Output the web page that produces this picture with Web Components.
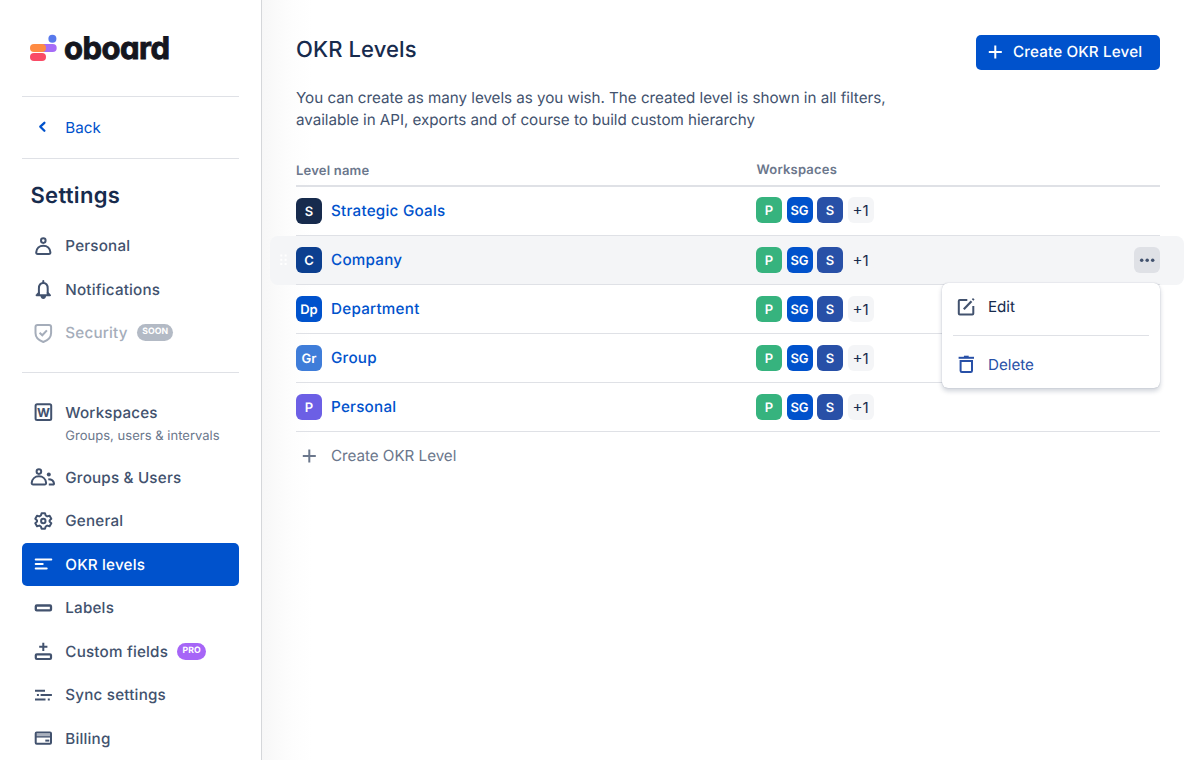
<!DOCTYPE html>
<html lang="en">
<head>
<meta charset="utf-8">
<title>OKR Levels</title>
<style>
  html, body {
    margin: 0;
    height: 100%;
    overflow: hidden;
    background: #fff;
  }
  body {
    font-family: Inter, "Liberation Sans", sans-serif;
    font-size: 15.2px;
    letter-spacing: -0.03px;
    text-rendering: geometricPrecision;
    color: #42526e;
  }
</style>
</head>
<body>
<okr-app></okr-app>

<script>
// Icons are drawn on a 26x24 grid, one unit per pixel
const ICONS = {
  back: '<path d="M14.1 7.800 10 11.700l4.100 4.100" stroke-width="2.300" stroke-linecap="round" stroke-linejoin="round"/>',
  person: '<circle cx="13" cy="6.6" r="2.3"/><path d="M5.9 18.3c.3-3.8 3.2-6.6 7.1-6.6s6.800 2.800 7.100 6.600c.1 1-.5 1.700-1.500 1.700H7.400c-1 0-1.600-.7-1.500-1.700z"/>',
  bell: '<path d="M8.600 18v-6.500c0-3.400 1.700-5.500 4.400-5.500s4.400 2.100 4.400 5.500V18" stroke-width="2"/><path d="M13 4v2M6.300 18.200h13.400M7 17.500l1.600-1.500M19 17.500 17.400 16" stroke-width="2" stroke-linecap="round"/><path d="M10.200 19h5.600c-.3 1.900-1.300 2.900-2.800 2.900s-2.500-1-2.800-2.900z" fill="currentColor" stroke="none"/>',
  shield: '<path d="M7.300 3.900h11.400c1.300 0 2.100.8 2.100 2.100v6c0 4.300-3 7.300-7.800 9-4.800-1.700-7.800-4.700-7.800-9V6c0-1.300.8-2.100 2.100-2.100z"/><path d="m9.300 11.800 2.700 2.500 4.600-4.900" stroke-width="2"/>',
  workspace: '<rect x="5.300" y="4.300" width="15.600" height="15.600" rx="1.500"/><text x="13.1" y="16.500" text-anchor="middle" font-size="12.500" font-weight="700" letter-spacing="0" fill="currentColor" stroke="none">W</text>',
  group: '<circle cx="8.600" cy="6.600" r="2.300"/><path d="M1.400 17.900c.3-3.800 3.200-6.600 7.200-6.600s6.900 2.800 7.200 6.600c.1 1-.5 1.600-1.500 1.600H2.900c-1 0-1.600-.6-1.500-1.600z"/><circle cx="18.500" cy="9.600" r="2" fill="currentColor" stroke="none"/><path d="M18 14.200c3.300 0 5.300 1.500 5.700 4.200.1.700-.3 1.100-1 1.100H18.500"/>',
  gear: '<path d="M11.300 4.200h3.400l.7 2.300 1.500.9 2.400-.6 1.700 2.900-1.700 1.700v1.200l1.700 1.700-1.700 2.900-2.400-.6-1.500.9-.7 2.300h-3.400l-.7-2.300-1.500-.9-2.400.6L5 14.300l1.700-1.700v-1.200L5 9.700l1.700-2.900 2.400.6 1.500-.9z" stroke-linejoin="round"/><circle cx="13" cy="12" r="2.200"/>',
  levels: '<path d="M5.400 7.500h15.600M5.400 12h7M5.400 16.600h11" stroke-linecap="round"/>',
  label: '<rect x="5.500" y="9.500" width="15.200" height="4.900" rx="1" stroke-width="2.300"/>',
  field: '<rect x="5.500" y="15.300" width="15.200" height="4.700" rx="1" stroke-width="2.200"/><path d="M13 3.700v8.200M8.900 7.800h8.200"/>',
  sync: '<path d="M4.700 7.700h10M10.300 12h11.300M6.600 12h2M4.700 16.400h10.500M17.500 16.400h2" stroke-width="2"/>',
  card: '<path d="M5.300 8h15.400v3H5.300z" fill="currentColor" stroke="none" opacity=".45"/><rect x="5.400" y="6.600" width="15.300" height="11.100" rx="1"/><path d="M5.400 10.900h15.300" stroke-width="1.300"/><path d="M15 14.600h4"/>',
  plus: '<path d="M13 5.500v13M6.500 12h13"/>',
  edit: '<path d="M14 5H6.500c-.6 0-1 .4-1 1v12.500c0 .6.4 1 1 1H19c.6 0 1-.4 1-1V11"/><path d="m10.500 14.200 7.700-8" stroke-width="2.200"/><path d="m19.300 5 1.200-1.200" stroke-width="2.200"/>',
  trash: '<path d="M5.300 5.800h15.400" stroke-width="2"/><path d="M10.600 4.700h4.800" stroke-width="2"/><path d="M7.300 9.100h11.400v9.700c0 .8-.4 1.200-1.200 1.200h-9c-.8 0-1.200-.4-1.200-1.200z" stroke-width="2"/>',
  dots: '<g fill="currentColor" stroke="none"><circle cx="7.400" cy="13.300" r="1.750"/><circle cx="12.900" cy="13.300" r="1.750"/><circle cx="18.400" cy="13.300" r="1.750"/></g>',
  grip: '<g fill="currentColor" stroke="none"><path d="M10 6.500h2v2h-2zM14.300 6.500h2v2h-2zM10 10.700h2v2h-2zM14.300 10.700h2v2h-2zM10 15h2v2h-2zM14.300 15h2v2h-2z"/></g>'
};

class UiIcon extends HTMLElement {
  constructor() {
    super();
    this.attachShadow({ mode: 'open' });
  }

  connectedCallback() {
    this.shadowRoot.innerHTML = `
      <style>
        :host { display: block; flex: none; width: 26px; height: 24px; }
        svg { display: block; overflow: visible; }
      </style>
      <svg width="26" height="24" viewBox="-0.3 0 26 24" fill="none" stroke="currentColor" stroke-width="2" aria-hidden="true">${ICONS[this.getAttribute('name')]}</svg>
    `;
  }
}

class OboardLogo extends HTMLElement {
  constructor() {
    super();
    this.attachShadow({ mode: 'open' });
    this.shadowRoot.innerHTML = `
      <style>
        :host { display: flex; align-items: flex-start; gap: 7px; }
        svg { display: block; flex: none; }
        span {
          margin-top: -1px;
          color: #15161e;
          font-size: 31px;
          font-weight: 700;
          line-height: 32px;
          letter-spacing: -0.5px;
          font-feature-settings: "cv11";
          -webkit-text-stroke: 0.9px #15161e;
        }
      </style>
      <svg width="27" height="28" viewBox="0 0 27 28">
        <rect x="10" y="10" width="16.700" height="8" rx="4" fill="#a66cf7"/>
        <rect x="0" y="10" width="16" height="8" rx="4" fill="#ff8b42"/>
        <rect x="0" y="19" width="16" height="8" rx="4" fill="#f94b66"/>
        <circle cx="22.400" cy="4.700" r="4" fill="#5879ec"/>
      </svg>
      <span>oboard</span>
    `;
  }
}

class NavItem extends HTMLElement {
  constructor() {
    super();
    this.attachShadow({ mode: 'open' });
  }

  connectedCallback() {
    this.shadowRoot.innerHTML = `
      <style>
        :host {
          display: flex;
          align-items: center;
          gap: 9.300px;
          height: 43.5px;
          padding-left: 8px;
          border-radius: 5px;
          font-weight: 500;
          letter-spacing: 0.2px;
          color: #42526e;
        }
        :host([active]) { background: #0052cc; color: #fff; }
        :host([disabled]) { color: #a5adba; }
        :host([link]) {
          box-sizing: border-box;
          height: 61px;
          padding-bottom: 1px;
          color: #0052cc;
          font-weight: 400;
          letter-spacing: 0;
        }
      </style>
      <ui-icon name="${this.getAttribute('icon')}"></ui-icon>
      <slot></slot>
    `;
  }
}

class UiTag extends HTMLElement {
  constructor() {
    super();
    this.attachShadow({ mode: 'open' });
    this.shadowRoot.innerHTML = `
      <style>
        :host {
          display: block;
          height: 17px;
          padding: 0 5.200px;
          border-radius: 9px;
          background: var(--tag, #b3bac5);
          color: #fff;
          font-size: 8.7px;
          font-weight: 700;
          line-height: 17.500px;
          letter-spacing: 0.1px;
        }
      </style>
      <slot></slot>
    `;
  }
}

class AppSidebar extends HTMLElement {
  constructor() {
    super();
    this.attachShadow({ mode: 'open' });
    this.shadowRoot.innerHTML = `
      <style>
        :host {
          display: block;
          flex: none;
          box-sizing: border-box;
          width: 262px;
          height: 760px;
          padding: 0 22px;
          background: #fff;
          border-right: 1px solid #d5d7da;
          overflow: hidden;
        }
        oboard-logo { height: 62px; padding: 34px 0 0 8px; }
        hr { margin: 0; border: 0; height: 1px; background: #dfe1e6; }
        h2 {
          margin: 0 0 13px;
          padding: 22px 0 0 8.5px;
          color: #172b4d;
          font-size: 22px;
          font-weight: 600;
          line-height: 30px;
          letter-spacing: 0.3px;
        }
        .section { padding: 17.500px 0; }
        small {
          display: block;
          margin: -8px 0 9.500px 43.300px;
          height: 20px;
          color: #6b778c;
          font-size: 13px;
          line-height: 20px;
          letter-spacing: 0.02px;
        }
        nav { width: 217.400px; }
      </style>
      <nav aria-label="Settings">
        <oboard-logo></oboard-logo>
        <hr>
        <nav-item icon="back" link>Back</nav-item>
        <hr>
        <h2>Settings</h2>
        <nav-item icon="person">Personal</nav-item>
        <nav-item icon="bell">Notifications</nav-item>
        <nav-item icon="shield" disabled>Security<ui-tag>SOON</ui-tag></nav-item>
        <hr style="margin-top: 17.500px">
        <div class="section">
          <nav-item icon="workspace">Workspaces</nav-item>
          <small>Groups, users &amp; intervals</small>
          <nav-item icon="group">Groups &amp; Users</nav-item>
          <nav-item icon="gear">General</nav-item>
          <nav-item icon="levels" active>OKR levels</nav-item>
          <nav-item icon="label">Labels</nav-item>
          <nav-item icon="field">Custom fields<ui-tag style="--tag: #a665f7">PRO</ui-tag></nav-item>
          <nav-item icon="sync">Sync settings</nav-item>
          <nav-item icon="card">Billing</nav-item>
        </div>
      </nav>
    `;
  }
}

class LevelBadge extends HTMLElement {
  constructor() {
    super();
    this.attachShadow({ mode: 'open' });
    this.shadowRoot.innerHTML = `
      <style>
        :host {
          display: block;
          flex: none;
          width: 26px;
          height: 26px;
          border-radius: 6px;
          background: var(--badge);
          color: #fff;
          font-size: 13px;
          font-weight: 600;
          line-height: 28px;
          text-align: center;
          letter-spacing: 0;
        }
        :host([more]) {
          background: #f4f5f7;
          color: #172b4d;
          font-size: 15.200px;
          font-weight: 400;
          line-height: 27px;
        }
      </style>
      <slot></slot>
    `;
  }
}

class LevelRow extends HTMLElement {
  constructor() {
    super();
    this.attachShadow({ mode: 'open' });
  }

  connectedCallback() {
    const hovered = this.hasAttribute('hovered');
    this.shadowRoot.innerHTML = `
      <style>
        :host {
          display: block;
          height: 49px;
          margin: 0 -24px 0 -26px;
          padding: 0 24px 0 26px;
          box-sizing: border-box;
          border-radius: 8px;
        }
        :host([hovered]) { background: #f4f5f7; }
        :host([first]) .spaces { margin-top: -2px; }
        .row {
          position: relative;
          display: grid;
          grid-template-columns: 460px 1fr 26px;
          align-items: center;
          height: 48px;
          border-bottom: 1px solid #dfe1e6;
        }
        .name { display: flex; align-items: center; gap: 9px; color: #0052cc; font-weight: 500; letter-spacing: 0.25px; }
        .label { padding-bottom: 2px; }
        .spaces { display: flex; gap: 4.500px; }
        .grip { position: absolute; left: -26px; color: #fff; }
        .more { height: 26px; border-radius: 6px; background: #dfe1e6; color: #42526e; }
      </style>
      <div class="row">
        ${hovered ? '<ui-icon class="grip" name="grip"></ui-icon>' : ''}
        <div class="name">
          <level-badge style="--badge: ${this.getAttribute('color')}">${this.getAttribute('short')}</level-badge>
          <span class="label"><slot></slot></span>
        </div>
        <div class="spaces">
          <level-badge style="--badge: #36b37e">P</level-badge>
          <level-badge style="--badge: #0052cc">SG</level-badge>
          <level-badge style="--badge: #2850a7">S</level-badge>
          <level-badge more>+1</level-badge>
        </div>
        ${hovered ? '<div class="more"><ui-icon name="dots"></ui-icon></div>' : ''}
      </div>
    `;
  }
}

class RowMenu extends HTMLElement {
  constructor() {
    super();
    this.attachShadow({ mode: 'open' });
    this.shadowRoot.innerHTML = `
      <style>
        :host {
          display: block;
          box-sizing: border-box;
          width: 218px;
          height: 105px;
          padding: 0 11px;
          border-radius: 6px;
          background: #fff;
          box-shadow: 0 3px 5px rgba(9, 30, 66, 0.2), 0 0 1px rgba(9, 30, 66, 0.31);
        }
        div { display: flex; align-items: center; gap: 9px; height: 48px; color: #172b4d; }
        .edit { height: 47px; padding-bottom: 5px; }
        ui-icon { color: #42526e; }
        hr { margin: 0; border: 0; height: 1px; background: #dfe1e6; }
        .delete, .delete ui-icon { color: #2850a7; }
        .delete { padding-top: 4px; }
      </style>
      <div class="edit"><ui-icon name="edit"></ui-icon>Edit</div>
      <hr>
      <div class="delete"><ui-icon name="trash"></ui-icon>Delete</div>
    `;
  }
}

class OkrLevels extends HTMLElement {
  constructor() {
    super();
    this.attachShadow({ mode: 'open' });
    this.shadowRoot.innerHTML = `
      <style>
        :host {
          display: block;
          position: relative;
          flex: 1;
          box-sizing: border-box;
          height: 760px;
          padding: 35px 24px 0 34px;
          background: linear-gradient(90deg, #f7f7f7 0, #fafafa 14px, #fdfdfd 30px, #fff 50px);
        }
        header { display: flex; justify-content: space-between; align-items: flex-start; height: 52px; }
        h1 {
          margin: 0;
          color: #172b4d;
          font-size: 22px;
          font-weight: 500;
          line-height: 30px;
          letter-spacing: 0.100px;
        }
        button {
          display: flex;
          align-items: center;
          gap: 5px;
          box-sizing: border-box;
          width: 184.500px;
          height: 34.500px;
          padding: 0 0 1px 6.500px;
          border: 0;
          border-radius: 5px;
          background: #0052cc;
          color: #fff;
          font: inherit;
          font-weight: 500;
          letter-spacing: 0.150px;
          text-rendering: inherit;
        }
        p { margin: 0; line-height: 22px; }
        .head {
          display: grid;
          grid-template-columns: 460.500px 1fr;
          height: 56px;
          border-bottom: 2px solid #dfe1e6;
          box-sizing: border-box;
          padding-top: 30px;
          color: #6b778c;
          font-size: 13px;
          font-weight: 600;
          line-height: 20px;
          letter-spacing: 0.2px;
        }
        .head span:last-child { margin-top: -1px; }
        .create { display: flex; align-items: center; gap: 9px; height: 48px; color: #6b778c; }
        .create span { padding-bottom: 2px; }
        row-menu { position: absolute; top: 283px; right: 24px; }
      </style>
      <header>
        <h1>OKR Levels</h1>
        <button><ui-icon name="plus"></ui-icon>Create OKR Level</button>
      </header>
      <p>You can create as many levels as you wish. The created level is shown in all filters,<br>available in API, exports and of course to build custom hierarchy</p>
      <div class="head"><span>Level name</span><span>Workspaces</span></div>
      <level-row short="S" color="#172b4d" first>Strategic Goals</level-row>
      <level-row short="C" color="#0c3f8f" hovered>Company</level-row>
      <level-row short="Dp" color="#0052cc">Department</level-row>
      <level-row short="Gr" color="#3f7dd9">Group</level-row>
      <level-row short="P" color="#6c5fe5">Personal</level-row>
      <div class="create"><ui-icon name="plus"></ui-icon><span>Create OKR Level</span></div>
      <row-menu></row-menu>
    `;
  }
}

class OkrApp extends HTMLElement {
  constructor() {
    super();
    this.attachShadow({ mode: 'open' });
    this.shadowRoot.innerHTML = `
      <style>
        :host { display: flex; width: 1184px; height: 760px; overflow: hidden; }
      </style>
      <app-sidebar></app-sidebar>
      <okr-levels></okr-levels>
    `;
  }
}

customElements.define('ui-icon', UiIcon);
customElements.define('oboard-logo', OboardLogo);
customElements.define('nav-item', NavItem);
customElements.define('ui-tag', UiTag);
customElements.define('app-sidebar', AppSidebar);
customElements.define('level-badge', LevelBadge);
customElements.define('level-row', LevelRow);
customElements.define('row-menu', RowMenu);
customElements.define('okr-levels', OkrLevels);
customElements.define('okr-app', OkrApp);
</script>
</body>
</html>
